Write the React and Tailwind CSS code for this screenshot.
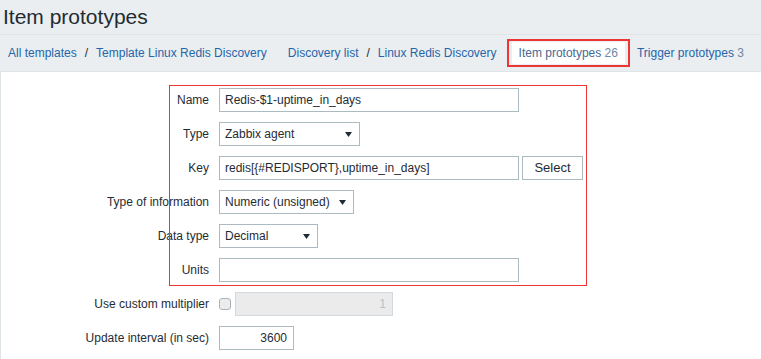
import React from "react";

const Arrow = () => (
  <svg width="7" height="5" viewBox="0 0 7 5" className="shrink-0">
    <polygon points="0,0 7,0 3.5,5" fill="#1f2c33" />
  </svg>
);

const TextBox = ({ value = "", width, align = "left", disabled = false }) => (
  <input
    readOnly
    value={value}
    className={
      "h-[24px] border px-[5px] text-[12px] outline-none " +
      (disabled
        ? "bg-[#ebebeb] border-[#d2dadf] text-[#b4c1c9] "
        : "bg-white border-[#acbbc2] text-[#1f2c33] ") +
      (align === "right" ? "text-right pr-[6px]" : "text-left")
    }
    style={{ width }}
  />
);

const SelectBox = ({ value, width }) => (
  <div
    className="h-[24px] border border-[#acbbc2] bg-white flex items-center justify-between pl-[5px] pr-[7px] text-[12px] text-[#1f2c33]"
    style={{ width }}
  >
    <span>{value}</span>
    <Arrow />
  </div>
);

const Row = ({ label, children }) => (
  <div className="flex items-center h-[24px]">
    <div className="w-[208px] text-right leading-[24px] text-[#1f2c33]">{label}</div>
    <div className="ml-[10px] flex items-center">{children}</div>
  </div>
);

export default function App() {
  return (
    <div className="min-h-screen flex flex-col bg-[#ebeef0] font-['Liberation_Sans',Arial,sans-serif] text-[12px] text-[#1f2c33]">
      {/* Header */}
      <div className="h-[35px] border-b border-[#dfe4e7] pl-[3px] pt-[5px]">
        <h1 className="text-[21px] leading-[24px] font-normal text-[#1f2c33]">Item prototypes</h1>
      </div>

      {/* Breadcrumbs */}
      <div className="h-[36px] flex items-center pl-[8px] whitespace-nowrap">
        <div className="flex items-center">
          <a className="text-[#2466aa]">All templates</a>
          <span className="px-[8px]">/</span>
          <a className="text-[#2466aa]">Template Linux Redis Discovery</a>
        </div>
        <div className="flex items-center ml-[21px]">
          <a className="text-[#2466aa]">Discovery list</a>
          <span className="px-[8px]">/</span>
          <a className="text-[#2466aa]">Linux Redis Discovery</a>
        </div>
        <div className="ml-[10px] border-2 border-[#ee3535] px-[3px] py-[1px]">
          <div className="h-[22px] bg-white px-[7px] leading-[22px] text-[#4a6890]">
            Item prototypes <span className="text-[#6f88a3]">26</span>
          </div>
        </div>
        <a className="ml-[7px] text-[#2466aa]">
          Trigger prototypes <span className="text-[#6f88a3]">3</span>
        </a>
      </div>

      {/* Form panel */}
      <div className="relative flex-1 bg-white border-t border-l border-[#dfe4e7] pt-[16px] pb-[10px]">
        <div className="flex flex-col gap-[10px]">
          <Row label="Name">
            <TextBox value="Redis-$1-uptime_in_days" width={300} />
          </Row>
          <Row label="Type">
            <SelectBox value="Zabbix agent" width={141} />
          </Row>
          <Row label="Key">
            <TextBox value="redis[{#REDISPORT},uptime_in_days]" width={300} />
            <button className="ml-[3px] h-[24px] w-[61px] border border-[#acbbc2] bg-white text-[13px] text-[#1f2c33]">
              Select
            </button>
          </Row>
          <Row label="Type of information">
            <SelectBox value="Numeric (unsigned)" width={135} />
          </Row>
          <Row label="Data type">
            <SelectBox value="Decimal" width={99} />
          </Row>
          <Row label="Units">
            <TextBox value="" width={300} />
          </Row>
          <Row label="Use custom multiplier">
            <div className="w-[12px] h-[12px] rounded-[3px] border border-[#a7b3ba] bg-[#ececec]" />
            <div className="ml-[4px]">
              <TextBox value="1" width={158} align="right" disabled />
            </div>
          </Row>
          <Row label="Update interval (in sec)">
            <TextBox value="3600" width={75} align="right" />
          </Row>
        </div>

        {/* highlight annotation */}
        <div className="absolute left-[168px] top-[13px] w-[418px] h-[201px] border border-[#ee3535] pointer-events-none" />
      </div>
    </div>
  );
}
